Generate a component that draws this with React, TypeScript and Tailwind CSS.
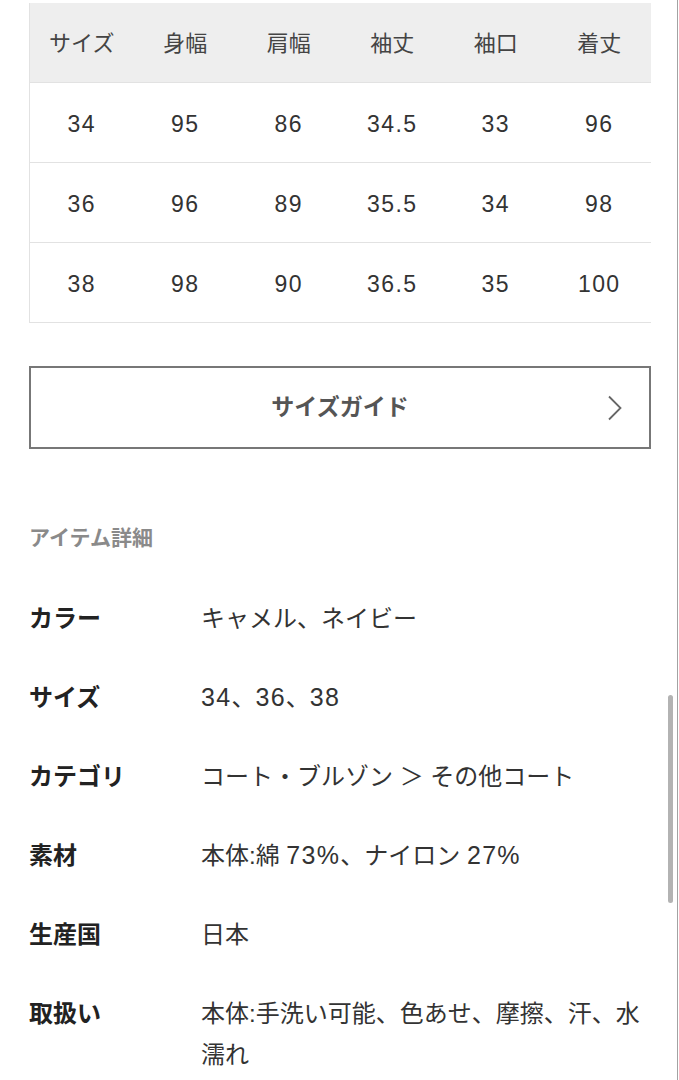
import React from "react";

const font = { fontFamily: '"Liberation Sans", "Noto Sans CJK JP", sans-serif' };

const headers = ["サイズ", "身幅", "肩幅", "袖丈", "袖口", "着丈"];
const rows = [
  ["34", "95", "86", "34.5", "33", "96"],
  ["36", "96", "89", "35.5", "34", "98"],
  ["38", "98", "90", "36.5", "35", "100"],
];

const details = [
  { label: "カラー", value: "キャメル、ネイビー" },
  { label: "サイズ", value: "34、36、38" },
  { label: "カテゴリ", value: "コート・ブルゾン ＞ その他コート" },
  { label: "素材", value: "本体:綿 73%、ナイロン 27%" },
  { label: "生産国", value: "日本" },
  { label: "取扱い", value: "本体:手洗い可能、色あせ、摩擦、汗、水濡れ" },
];

// digits in the reference are set wider than Arial, so space them a little
function Text({ value }: { value: string }) {
  const parts = value.split(/([0-9%.]+)/);
  return (
    <>
      {parts.map((p, i) =>
        /^[0-9%.]+$/.test(p) ? (
          <span key={i} className="text-[25px] tracking-[1.3px]">
            {p}
          </span>
        ) : (
          <React.Fragment key={i}>{p}</React.Fragment>
        )
      )}
    </>
  );
}

function SizeTable() {
  return (
    <div className="w-[622px] border-l border-[#e2e2e2]">
      <div className="grid grid-cols-6 h-[80px] pt-[2px] bg-[#eeeeee] border-b border-[#e2e2e2] items-center text-[22px] text-[#444]">
        {headers.map((h) => (
          <div key={h} className="text-center">
            {h}
          </div>
        ))}
      </div>
      {rows.map((r, i) => (
        <div
          key={i}
          className="grid grid-cols-6 h-[80px] pt-[4px] border-b border-[#e2e2e2] items-center text-[23px] tracking-[1.4px] text-[#333]"
        >
          {r.map((c, j) => (
            <div key={j} className="text-center">
              {c}
            </div>
          ))}
        </div>
      ))}
    </div>
  );
}

export default function App() {
  return (
    <div className="w-[679px] h-[1080px] overflow-hidden bg-white relative" style={font}>
      <div className="w-[678px] h-full border-r border-[#a3a3a3] pl-[29px] pt-[3px]">
        <SizeTable />

        <button className="mt-[43px] w-[622px] h-[83px] border-2 border-[#777] flex items-center relative">
          <span className="flex-1 text-center text-[23px] font-bold text-[#555]">サイズガイド</span>
          <svg
            className="absolute right-[26px] top-1/2 -translate-y-1/2"
            width="16"
            height="26"
            viewBox="0 0 16 26"
            fill="none"
            stroke="#666"
            strokeWidth="1.8"
          >
            <path d="M2 1.5 L13.5 13 L2 24.5" />
          </svg>
        </button>

        <div className="mt-[74px] text-[21px] leading-[30px] font-bold text-[#8a8a8a]">アイテム詳細</div>

        <div className="mt-[45px] flex flex-col gap-[38px]">
          {details.map((d) => (
            <div key={d.label} className="flex leading-[41px] text-[24px]">
              <div className="w-[172px] shrink-0 font-bold text-[#222]">{d.label}</div>
              <div className="w-[452px] text-[#333]">
                <Text value={d.value} />
              </div>
            </div>
          ))}
        </div>
      </div>

      <div className="absolute left-[668px] top-[695px] w-[5px] h-[208px] rounded-full bg-[#b3b3b3]" />
    </div>
  );
}
